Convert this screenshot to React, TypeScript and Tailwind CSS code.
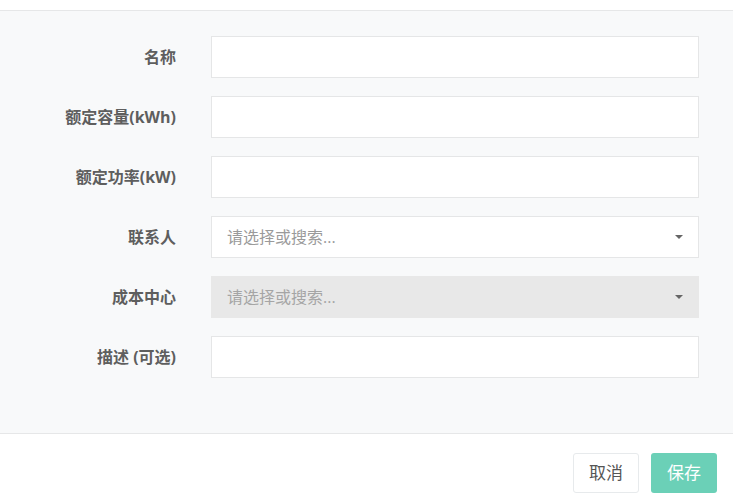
const fields = [
  { label: "名称", type: "input" },
  { label: "额定容量(kWh)", type: "input" },
  { label: "额定功率(kW)", type: "input" },
  { label: "联系人", type: "select" },
  { label: "成本中心", type: "select-disabled" },
  { label: "描述 (可选)", type: "input" },
];

function Caret() {
  return (
    <svg width="8" height="4" viewBox="0 0 8 4" className="shrink-0">
      <path d="M0 0h8L4 4z" fill="#666" />
    </svg>
  );
}

export default function App() {
  return (
    <div
      className="w-[733px] h-[500px] bg-white flex flex-col"
      style={{ fontFamily: '"Open Sans", "Noto Sans CJK SC", sans-serif' }}
    >
      <div className="h-[11px] border-b border-[#e6e7e8] shrink-0" />

      {/* Body */}
      <div className="bg-[#f8f9fa] border-b border-[#e6e7e8] pt-[25px] pb-[55px] flex flex-col gap-[18px]">
        {fields.map((f) => (
          <div key={f.label} className="flex items-center">
            <label className="w-[176px] text-right text-[16px] font-bold text-[#5e5e5e]">
              {f.label}
            </label>
            <div className="ml-[35px] w-[488px] h-[42px]">
              {f.type === "input" && (
                <div className="h-full bg-white border border-[#e5e6e7]" />
              )}
              {f.type === "select" && (
                <div className="h-full bg-white border border-[#e5e6e7] flex items-center pl-[15px] pr-[15px]">
                  <span className="flex-1 text-[16px] text-[#9a9a9a]">请选择或搜索...</span>
                  <Caret />
                </div>
              )}
              {f.type === "select-disabled" && (
                <div className="h-full bg-[#e8e8e8] flex items-center pl-[16px] pr-[16px]">
                  <span className="flex-1 text-[16px] text-[#a5a5a5]">请选择或搜索...</span>
                  <Caret />
                </div>
              )}
            </div>
          </div>
        ))}
      </div>

      {/* Footer */}
      <div className="flex justify-end gap-[12px] pt-[19px] pr-[16px]">
        <button className="w-[66px] h-[40px] bg-white border border-[#e7eaec] rounded-[3px] text-[17px] text-[#555]">
          取消
        </button>
        <button className="w-[66px] h-[40px] bg-[#6bd0b7] rounded-[3px] text-[17px] text-white">
          保存
        </button>
      </div>
    </div>
  );
}
